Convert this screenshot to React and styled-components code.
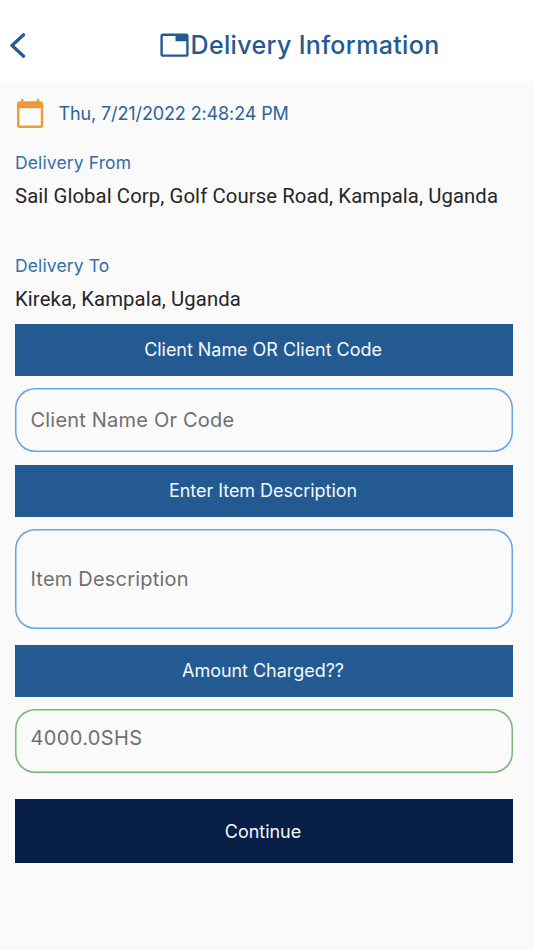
import React from "react";
import styled, { createGlobalStyle } from "styled-components";

const fields = [
  {
    title: "Client Name OR Client Code",
    hint: "Client Name Or Code",
    height: 64,
    gap: 13,
  },
  {
    title: "Enter Item Description",
    hint: "Item Description",
    height: 100,
    gap: 16,
  },
  {
    title: "Amount Charged??",
    hint: "4000.0SHS",
    height: 64,
    gap: 26,
    lift: 6,
    color: "#7ab675",
    spacing: "0.35px",
  },
];

const BackIcon = () => (
  <svg width="17" height="26" viewBox="0 0 17 26" fill="none">
    <path
      d="M14.6 1.8 3 12.5l11.6 10.7"
      stroke="#235a91"
      strokeWidth="3.2"
      strokeLinecap="round"
      strokeLinejoin="round"
    />
  </svg>
);

const TabIcon = () => (
  <svg width="29" height="24" viewBox="0 0 29 24">
    <path
      fill="#235a91"
      fillRule="evenodd"
      d="M3 .6h23a2.6 2.6 0 0 1 2.6 2.6v18a2.6 2.6 0 0 1-2.6 2.6H3A2.600 2.600 0 0 1 .4 21.200v-18A2.600 2.600 0 0 1 3 .6ZM2.800 3v18.400h23.400V8.200H15.500V3Z"
    />
  </svg>
);

const CalendarIcon = () => (
  <svg width="28" height="30" viewBox="0 0 28 30">
    <path
      fill="#ed9b38"
      fillRule="evenodd"
      d="M5 0h2.500v2.200h13.300V0h2.500v2.200H24.500a2.700 2.700 0 0 1 2.700 2.700v21.300a2.700 2.700 0 0 1-2.700 2.700H3.700a2.700 2.700 0 0 1-2.700-2.700v-21.300a2.700 2.700 0 0 1 2.700-2.700H5ZM3.400 9.300V26.500H24.800V9.300Z"
    />
  </svg>
);

const App = () => {
  return (
    <StyledPage>
      <GlobalStyle />
      <StyledHeader>
        <BackButton aria-label="Back">
          <BackIcon />
        </BackButton>
        <Title>
          <TabIcon />
          <TitleText>Delivery Information</TitleText>
        </Title>
      </StyledHeader>
      <StyledContent>
        <DateRow>
          <CalendarIcon />
          <DateText>Thu, 7/21/2022 2:48:24 PM</DateText>
        </DateRow>
        <Place $gap={45}>
          <Label>Delivery From</Label>
          <Address>Sail Global Corp, Golf Course Road, Kampala, Uganda</Address>
        </Place>
        <Place $gap={12}>
          <Label>Delivery To</Label>
          <Address>Kireka, Kampala, Uganda</Address>
        </Place>
        {fields.map((field) => (
          <Field key={field.title} $gap={field.gap}>
            <Banner>{field.title}</Banner>
            <Input
              placeholder={field.hint}
              $height={field.height}
              $lift={field.lift}
              $color={field.color}
              $spacing={field.spacing}
            />
          </Field>
        ))}
        <Continue>Continue</Continue>
      </StyledContent>
    </StyledPage>
  );
};

const GlobalStyle = createGlobalStyle`
  * {
    box-sizing: border-box;
  }
  body {
    margin: 0;
    background: #fafafa;
  }
`;

const StyledPage = styled.div`
  min-height: 100vh;
  background: #fafafa;
  font-family: Inter, "Liberation Sans", sans-serif;
`;

const StyledHeader = styled.header`
  display: flex;
  height: 81px;
  padding: 0 0 0 9px;
  background: #fff;
`;

const BackButton = styled.button`
  display: flex;
  width: 17px;
  height: 26px;
  margin: 33px 134px 0 0;
  padding: 0;
  border: 0;
  background: none;
`;

const Title = styled.div`
  display: flex;
  margin-top: 33px;
`;

const TitleText = styled.h1`
  margin: -1px 0 0 1.5px;
  font-size: 25px;
  line-height: 26px;
  font-weight: 500;
  letter-spacing: 0.35px;
  color: #235a91;
  white-space: nowrap;
`;

const StyledContent = styled.main`
  display: flex;
  flex-direction: column;
  padding: 18px 21px 0 15px;
`;

const DateRow = styled.div`
  display: flex;
  height: 30px;
  padding-left: 1px;
  margin-bottom: 22px;
`;

const DateText = styled.span`
  margin-left: 14.5px;
  font-size: 18px;
  line-height: 29px;
  letter-spacing: -0.12px;
  color: #2c649b;
`;

const Place = styled.section`
  margin-bottom: ${(props) => props.$gap}px;
`;

const Label = styled.div`
  font-size: 17.5px;
  line-height: 24px;
  letter-spacing: 0.12px;
  color: #3470a8;
`;

const Address = styled.div`
  margin-top: 9px;
  font-family: Roboto, sans-serif;
  font-size: 20.3px;
  line-height: 25px;
  letter-spacing: 0.1px;
  color: #262626;
  white-space: nowrap;
`;

const Field = styled.section`
  display: flex;
  flex-direction: column;
  margin-bottom: ${(props) => props.$gap}px;
`;

const Banner = styled.div`
  height: 52px;
  margin-bottom: 12px;
  padding-right: 2px;
  font-size: 18px;
  line-height: 51px;
  letter-spacing: -0.04px;
  text-align: center;
  color: #f3faff;
  background: #235a91;
`;

const Input = styled.input`
  width: 100%;
  height: ${(props) => props.$height}px;
  padding: 0 15.5px ${(props) => props.$lift || 0}px;
  border: 0;
  border-radius: 20px;
  outline: none;
  background: transparent;
  box-shadow: inset 0 0 0 1.5px ${(props) => props.$color || "#68a4e5"};
  font-family: inherit;
  font-size: 20px;
  letter-spacing: ${(props) => props.$spacing || "0.2px"};

  &::placeholder {
    color: #707070;
    opacity: 1;
  }
`;

const Continue = styled.button`
  height: 64px;
  padding: 0 2px 0 0;
  border: 0;
  font-family: inherit;
  font-size: 18px;
  letter-spacing: -0.04px;
  color: #f4f8ff;
  background: #071e47;
`;

export default App;
